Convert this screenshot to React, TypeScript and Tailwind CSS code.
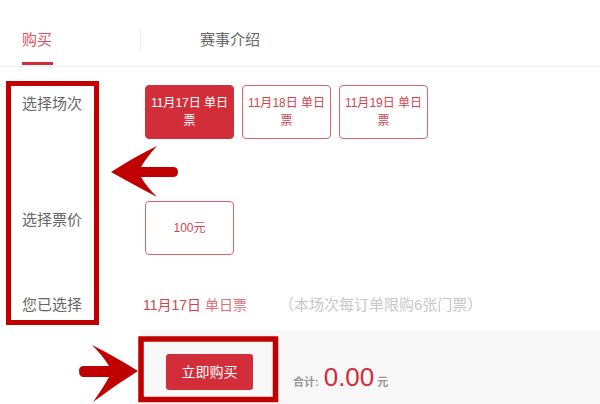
import React from "react";

const cjk = { fontFamily: '"Liberation Sans", "Noto Sans CJK SC", sans-serif' };

function DateBtn({ day, active }: { day: string; active?: boolean }) {
  return (
    <div
      className={
        "w-[89px] h-[54px] rounded-[4px] border flex items-center justify-center text-center text-[12px] leading-[18px] " +
        (active
          ? "bg-[#d12e3a] border-[#d12e3a] text-white"
          : "bg-white border-[#e2626b] text-[#d4434e]")
      }
    >
      <span>
        11月{day}日 单日
        <br />票
      </span>
    </div>
  );
}

export default function App() {
  return (
    <div className="relative w-[600px] h-[404px] overflow-hidden bg-white" style={cjk}>
      {/* tabs */}
      <div className="flex items-start border-b border-[#eeeeee] h-[67px]">
        <div className="ml-[22px] w-[31px] flex flex-col">
          <div className="pt-[30px] h-[50px] text-[15px] leading-[20px] text-[#dc5366] whitespace-nowrap">购买</div>
          <div className="mt-[12px] h-[3px] bg-[#d12e3a]" />
        </div>
        <div className="ml-[87px] mt-[31px] w-px h-[18px] bg-[#eeeeee]" />
        <div className="ml-[59px] pt-[30px] text-[15px] leading-[20px] text-[#666666]">赛事介绍</div>
      </div>

      {/* row 1 */}
      <div className="flex mt-[18px]">
        <div className="w-[145px] pl-[22px] pt-[10px] text-[15px] leading-[18px] text-[#666666]">选择场次</div>
        <div className="flex gap-[8px]">
          <DateBtn day="17" active />
          <DateBtn day="18" />
          <DateBtn day="19" />
        </div>
      </div>

      {/* row 2 */}
      <div className="flex mt-[62px]">
        <div className="w-[145px] pl-[22px] pt-[10px] text-[15px] leading-[18px] text-[#666666]">选择票价</div>
        <div className="w-[89px] h-[54px] rounded-[4px] border border-[#e2626b] flex items-center justify-center text-[12px] text-[#d4434e]">
          100元
        </div>
      </div>

      {/* row 3 */}
      <div className="flex items-center mt-[40px] h-[20px]">
        <div className="w-[143px] pl-[22px] text-[15px] leading-[18px] text-[#666666]">您已选择</div>
        <div className="text-[14px] text-[#d4434e]">
          11月17日 <span className="text-[#e0707a]">单日票</span>
        </div>
        <div className="ml-[32px] text-[15px] text-[#c8c8c8]">（本场次每订单限购6张门票）</div>
      </div>

      {/* footer */}
      <div className="absolute left-[140px] right-0 top-[330px] bottom-0 bg-[#f8f8f8] flex items-start pl-[26px] pt-[24px]">
        <div className="w-[87px] h-[36px] rounded-[3px] bg-[#d12e3a] text-white text-[14px] flex items-center justify-center">
          立即购买
        </div>
        <div className="ml-[40px] mt-[10px] flex items-baseline">
          <span className="text-[11px] font-bold text-[#999999]">合计:</span>
          <span className="ml-[5px] text-[26px] leading-[26px] text-[#d12e3a]" style={{ fontFamily: '"Liberation Sans", sans-serif' }}>
            0.00
          </span>
          <span className="ml-[3px] text-[11px] font-bold text-[#999999]">元</span>
        </div>
      </div>

      {/* annotations */}
      <svg className="absolute inset-0 pointer-events-none" width="600" height="404" viewBox="0 0 600 404">
        <rect x="8.5" y="83.5" width="88" height="239" fill="none" stroke="#c00000" strokeWidth="5" />
        <rect x="141" y="339" width="134.5" height="60.5" fill="none" stroke="#c00000" strokeWidth="5.5" />
        <path
          d="M111 172 Q136 156 157 146 Q146 158 141 167 L173 167 Q178 167 178 172 Q178 177 173 177 L141 177 Q146 186 157 197 Q136 186 111 172 Z"
          fill="#c00000"
        />
        <path
          d="M138 371 Q114 356 92 345 Q103 356 109 366 L84 366 Q79 366 79 371 Q79 377 84 377 L109 377 Q103 388 93 402 Q114 386 138 371 Z"
          fill="#c00000"
        />
      </svg>
    </div>
  );
}
